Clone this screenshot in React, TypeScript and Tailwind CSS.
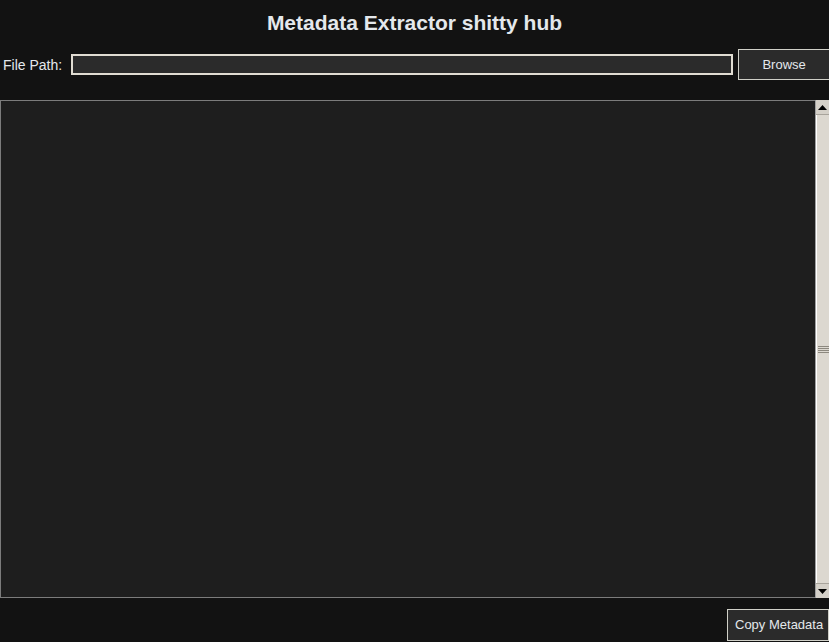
import React from "react";

function Scrollbar() {
	return (
		<div className="w-[14px] h-full flex flex-col bg-[#d4d0c8] border-l border-[#a0a0a0]">
			{/* up arrow */}
			<div className="h-[15px] flex items-center justify-center border-b border-[#a8a49c]">
				<svg width="9" height="5" viewBox="0 0 9 5">
					<polygon points="4.5,0 9,5 0,5" fill="#000" />
				</svg>
			</div>
			{/* thumb */}
			<div className="flex-1 flex items-center justify-center border-l border-[#ffffff] bg-[#dcd8d0]">
				<div className="flex flex-col gap-[1px] w-[11px]">
					<div className="h-[1px] bg-[#8c887f]" />
					<div className="h-[1px] bg-[#8c887f]" />
					<div className="h-[1px] bg-[#8c887f]" />
					<div className="h-[1px] bg-[#8c887f]" />
				</div>
			</div>
			{/* down arrow */}
			<div className="h-[15px] flex items-center justify-center border-t border-[#a8a49c]">
				<svg width="9" height="5" viewBox="0 0 9 5">
					<polygon points="0,0 9,0 4.5,5" fill="#000" />
				</svg>
			</div>
		</div>
	);
}

export default function App() {
	return (
		<div className="w-[829px] h-[642px] bg-[#121212] flex flex-col overflow-hidden font-['Liberation_Sans',Arial,sans-serif] text-[#e4e8ec]">
			{/* Title */}
			<h1 className="pt-[11px] h-[48px] text-center text-[21px] leading-[24px] font-bold">
				Metadata Extractor shitty hub
			</h1>

			{/* File path row */}
			<div className="flex items-center h-[31px] mt-[1px] pl-[3px] overflow-hidden">
				<span className="text-[14px] leading-none whitespace-nowrap shrink-0">File Path:</span>
				<input
					type="text"
					className="ml-[9px] w-[662px] shrink-0 h-[21px] bg-[#2b2b2b] border-2 border-[#e0dcd2] outline-none text-[13px] px-1"
				/>
				<button className="ml-[5px] w-[92px] h-[31px] shrink-0 bg-[#2b2b2b] border border-[#d0d0c8] text-[13px] text-[#e4e8ec]">
					Browse
				</button>
			</div>

			{/* Output area */}
			<div className="mt-[20px] h-[498px] flex">
				<div className="flex-1 bg-[#1e1e1e] border border-[#7c7c7c] border-r-0" />
				<Scrollbar />
			</div>

			{/* Bottom */}
			<div className="mt-[11px] flex justify-end">
				<button className="w-[102px] h-[32px] bg-[#2b2b2b] border border-[#d0d0c8] text-[13px] text-[#e4e8ec] text-left pl-[7px]">
					Copy Metadata
				</button>
			</div>
		</div>
	);
}
